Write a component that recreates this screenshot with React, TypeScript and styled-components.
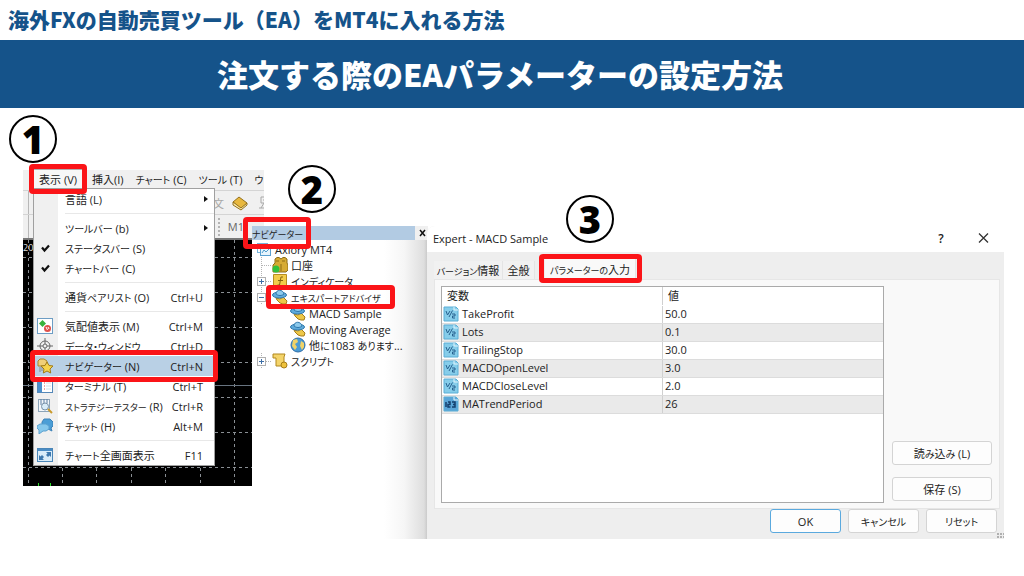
import React from "react";
import styled, { createGlobalStyle, css } from "styled-components";

const GlobalStyle = createGlobalStyle`
  * { box-sizing: border-box; }
  body {
    margin: 0;
    background: #ffffff;
    color: #222222;
    font-family: "Open Sans", "Noto Sans CJK JP", sans-serif;
    font-size: 11px;
  }
  button {
    margin: 0;
    padding: 0;
    border: 0;
    background: none;
    color: inherit;
    font: inherit;
    white-space: nowrap;
  }
  ul { list-style: none; margin: 0; padding: 0; }
  svg { display: block; }
`;

const Page = styled.main`
  overflow: hidden;
  padding-bottom: 37px;
`;

const Lead = styled.p`
  margin: 0;
  height: 40px;
  padding: 0 8px;
  color: #15538a;
  font: 900 21px/38px "Noto Sans CJK JP", sans-serif;
  white-space: nowrap;
`;

const Banner = styled.h1`
  margin: 0;
  height: 68px;
  padding-right: 24px;
  background: #15538a;
  color: #ffffff;
  text-align: center;
  font: 900 31px/68px "Noto Sans CJK JP", sans-serif;
`;

const Steps = styled.div`
  display: flex;
  align-items: flex-start;
  padding: 0 20px 0 23px;
`;

const Step = styled.section<{ $top: number }>`
  position: relative;
  min-width: 0;
  margin-top: ${(p) => p.$top}px;
`;

const PlatformStep = styled(Step)`
  flex: 0 0 241px;
`;

const NavigatorStep = styled(Step)`
  flex: 0 0 176px;
  margin-left: -12px;
`;

const DialogStep = styled(Step)`
  flex: 1;
  margin-left: -1px;
`;

const Badge = styled.span<{ $x: number; $y: number }>`
  position: absolute;
  z-index: 3;
  left: ${(p) => p.$x}px;
  top: ${(p) => p.$y}px;
  width: 48px;
  height: 48px;
  border: 2px solid #000000;
  border-radius: 50%;
  background: #ffffff;
  color: #000000;
  text-align: center;
  font: 900 38px/44px "Noto Sans", sans-serif;
`;

const Framed = styled.span<{ $x?: number; $y?: number }>`
  position: relative;
  display: inline-flex;
  align-items: center;
  &::after {
    content: "";
    position: absolute;
    z-index: 2;
    inset: -${(p) => p.$y ?? 4}px -${(p) => p.$x ?? 4}px;
    border: 5px solid #fb1418;
    border-radius: 4px;
    pointer-events: none;
  }
`;

const LabelText = styled.span`
  white-space: nowrap;
`;

const KanaRun = styled.span<{ $tight?: boolean }>`
  font-size: ${(p) => (p.$tight ? 9 : 10)}px;
  font-feature-settings: "palt";
`;

/* Kana is set smaller and proportionally, as in the narrow Windows UI fonts. */
function Label({ children, tight }: { children: string; tight?: boolean }) {
  return (
    <LabelText>
      {children
        .split(/([\u3041-\u30ff]+)/)
        .map((part, i) => (i % 2 ? <KanaRun key={i} $tight={tight}>{part}</KanaRun> : part))}
    </LabelText>
  );
}

/* ---------- trading platform ---------- */

const MenuBar = styled.div`
  display: flex;
  align-items: center;
  gap: 12px;
  height: 20px;
  padding: 0 0 2px 10px;
  background: #f0f0f0;
`;

const MenuBarItem = styled.button`
  flex: none;
  height: 20px;
`;

const OpenMenuItem = styled(MenuBarItem)`
  width: 50px;
  border: 1px solid #b0b0b0;
  background: #f7f7f7;
`;

const OpenMenuFrame = styled(Framed)`
  margin-right: -3px;
`;

const ToolRow = styled.div<{ $end?: number }>`
  display: flex;
  align-items: center;
  justify-content: flex-end;
  gap: 8px;
  height: 24px;
  padding-right: ${(p) => p.$end ?? 0}px;
  overflow: hidden;
  border-top: 1px solid #d4d4d4;
  background: linear-gradient(90deg, #f0f0f0 5px, #b8b8b8 5px, #b8b8b8 6px, #f0f0f0 6px);
  color: #666666;
`;

const FaintText = styled.span`
  color: #a8a8a8;
`;

const CutTool = styled.span`
  margin-right: -8px;
`;

const Grip = styled.span`
  height: 18px;
  border-left: 2px dotted #b4b4b4;
`;

const ChartArea = styled.div`
  width: 229px;
  height: 248px;
  background: #000000;
  border-top: 2px solid #777777;
  svg { width: 100%; height: 100%; overflow: visible; }
`;

const Menu = styled.ul`
  position: absolute;
  z-index: 1;
  left: 10px;
  top: 18px;
  width: 182px;
  border: 1px solid #a0a0a0;
  background: linear-gradient(90deg, #f0f0f0 24px, #ffffff 24px);
`;

const MenuRow = styled.button<{ $active?: boolean }>`
  display: flex;
  align-items: center;
  width: 180px;
  height: 20px;
  padding-right: 11px;
  text-align: left;
  ${(p) => p.$active && css`background: #b9d0e5;`}
`;

const MenuIcon = styled.span`
  flex: 0 0 31px;
  padding-left: 3px;
`;

const Shortcut = styled.span`
  margin-left: auto;
`;

const SubmenuArrow = styled.span`
  margin: 0 -5px 0 auto;
  border: 3px solid transparent;
  border-left: 4px solid #111111;
  border-right: 0;
`;

const Divider = styled.li`
  height: 9px;
  margin-left: 31px;
  &::before {
    content: "";
    display: block;
    padding-top: 4px;
    border-bottom: 1px solid #e8e8e8;
  }
`;

const MenuFrame = styled(Framed)`
  display: flex;
`;

type IconName =
  | "check" | "market" | "target" | "star" | "terminal" | "tester" | "chat" | "full"
  | "root" | "people" | "script" | "fx" | "hat" | "globe" | "half" | "int" | "book" | "chartTool" | "none";

function Icon({ name }: { name: IconName }) {
  return (
    <svg width="16" height="16" viewBox="0 0 16 16" aria-hidden="true">
      {name === "check" && <path d="M5 7.500l2.500 3L12 5.500" fill="none" stroke="#111" strokeWidth="2.200" />}
      {name === "market" && (
        <>
          <rect x=".5" y=".5" width="15" height="15" fill="#fff" stroke="#6d9dc4" />
          <path d="M5.500 2L9 5.500 5.500 9 2 5.500z" fill="#38b23c" />
          <circle cx="10.500" cy="10.500" r="3.500" fill="#e0504a" />
          <path d="M9 9l1.500 3M11 9l1 2" stroke="#fff" />
        </>
      )}
      {name === "target" && (
        <g fill="none" stroke="#666">
          <circle cx="8" cy="8" r="5" />
          <circle cx="8" cy="8" r="2" />
          <path d="M8 0v6M8 10v6M0 8h6M10 8h6" />
        </g>
      )}
      {name === "star" && (
        <>
          <path d="M1 3l2-2h4l3 2v5H1z" fill="#f0cf78" stroke="#a9852d" />
          <path d="M3 9v5M5 9v4" stroke="#8b8b8b" />
          <path d="M10 4l2 3.500 4 .5-3 3 .700 4L10 13l-3.700 2 .700-4-3-3 4-.500z" fill="#f7d44c" stroke="#a07a17" />
        </>
      )}
      {name === "terminal" && (
        <>
          <rect x=".5" y="1.500" width="15" height="13" fill="#fff" stroke="#5588b8" />
          <path d="M1 2h4v12H1z" fill="#4b8fcc" />
          <path d="M7 5h1M7 8h1M7 11h1" stroke="#d44" />
          <path d="M9 5h5M9 8h5M9 11h5" stroke="#d3dfe9" />
        </>
      )}
      {name === "tester" && (
        <>
          <rect x="1.500" y="1.500" width="11" height="12" fill="#f4f7fa" stroke="#8ca4b8" />
          <path d="M4 1v6M7 1v4M10 1v4" stroke="#5b7fa3" />
          <circle cx="8" cy="8.500" r="3.500" fill="#d9ecf8" stroke="#7890a6" />
          <path d="M11 11l4 4" stroke="#c99a2c" strokeWidth="2" />
        </>
      )}
      {name === "chat" && (
        <>
          <path d="M7 1h6l3 3v4l-2 2 1 3-4-2-6-3V4z" fill="#4b9ed6" stroke="#3c82b8" />
          <path d="M3 6h6l3 2v3l-3 2H6l-4 3v-4L0 10V8z" fill="#86c8ec" stroke="#5aa0cf" />
        </>
      )}
      {name === "full" && (
        <>
          <rect x=".5" y="1.500" width="15" height="13" fill="#d9ecf9" stroke="#4a86b8" />
          <path d="M1 2h14v2H1z" fill="#4a8cc4" />
          <path d="M9 5h5v5l-1.500-1.500L11 10 9 8l1.500-1.500zM7 13H2V8l1.500 1.500L5 8l2 2-1.500 1.500z" fill="#3d78ae" />
        </>
      )}
      {name === "root" && (
        <>
          <rect x="1.500" y="2.500" width="10" height="9" fill="#fff" stroke="#78b4dc" />
          <rect x="4.500" y="5.500" width="10" height="9" fill="#e7f4fc" stroke="#5aa0d0" />
          <path d="M6 12l2-3 2 2 3-3" fill="none" stroke="#4f9ccc" />
        </>
      )}
      {name === "people" && (
        <>
          <path d="M1 15V8l2-2V2l2-1.500h2L9 2l2-1.500h2L15 2v4l1 2v5l-2 2z" fill="#d6ab35" stroke="#8d6c16" />
          <path d="M4 4h3M10 4h3M9 7v7" stroke="#8d6c16" />
          <circle cx="4" cy="12" r="3.500" fill="#32c13c" />
        </>
      )}
      {name === "fx" && (
        <>
          <path d="M1.500 1.500h13v13h-13z" fill="#f2cc4a" stroke="#b78d1f" />
          <path d="M11 4H9L7.500 12H5.500M6 7.500h5" fill="none" stroke="#86640c" />
        </>
      )}
      {name === "hat" && (
        <>
          <path d="M4 9l4 1 3-2 4 4-1 3h-3l-3-1-3-3z" fill="#edc748" stroke="#a77d19" />
          <ellipse cx="7.500" cy="6" rx="7" ry="3" fill="#5eaadb" stroke="#2f78ac" />
          <path d="M4 5c0-5 7-5 8 0-2 2-6 2-8 0z" fill="#8dcaec" stroke="#2f78ac" />
        </>
      )}
      {name === "globe" && (
        <>
          <circle cx="8" cy="8" r="7" fill="#4b9bd4" stroke="#2f6ea8" />
          <path d="M3 3l4-1 1 3-3 2 2 3-2 3-3-4zM11 4l3 2v4l-2 3-2-4z" fill="#f0d266" />
        </>
      )}
      {name === "script" && (
        <>
          <path d="M1 1h12l-1 3v9H4V5H1z" fill="#f4d46a" stroke="#b0871f" />
          <circle cx="12" cy="12" r="3" fill="#eec23c" stroke="#a77d19" />
        </>
      )}
      {(name === "half" || name === "int") && (
        <>
          <path d="M1 1h12l2 2v12H1z" fill={name === "int" ? "#5aa5d8" : "#86cdea"} stroke="#5aaed6" />
          <path d="M11 1v3h4" fill="none" stroke="#e0f4fc" />
          {name === "half" ? (
            <path d="M3 5l1.500 4L7 5M9.500 4.500L6 11M9 8h3v2H9.500v2H12" fill="none" stroke="#27618f" />
          ) : (
            <path d="M3 6v5M5 6h2v2.500H5V11h2.500M9 6h3v5H9M10 8.500h2" fill="none" stroke="#133e6c" strokeWidth="1.500" />
          )}
        </>
      )}
      {name === "book" && (
        <>
          <path d="M1 7l6-5 8 6-6 6z" fill="#e8b83e" stroke="#94701a" />
          <path d="M1 7v3l8 5 6-5V8l-6 5z" fill="#fbe9a8" stroke="#94701a" />
        </>
      )}
      {name === "chartTool" && (
        <g fill="none" stroke="#a8a8a8">
          <path d="M5 2h8v6H5zM3 13h10M5 13l3-5M7 5h4" />
        </g>
      )}
    </svg>
  );
}

type MenuEntry = {
  label: string;
  icon?: IconName;
  keys?: string;
  sub?: boolean;
  active?: boolean;
  tight?: boolean;
} | null;

const menuEntries: MenuEntry[] = [
  { label: "言語 (L)", sub: true },
  null,
  { label: "ツールバー (b)", sub: true },
  { label: "ステータスバー (S)", icon: "check" },
  { label: "チャートバー (C)", icon: "check" },
  null,
  { label: "通貨ペアリスト (O)", keys: "Ctrl+U" },
  null,
  { label: "気配値表示 (M)", icon: "market", keys: "Ctrl+M" },
  { label: "データ・ウィンドウ", icon: "target", keys: "Ctrl+D" },
  { label: "ナビゲーター (N)", icon: "star", keys: "Ctrl+N", active: true },
  { label: "ターミナル (T)", icon: "terminal", keys: "Ctrl+T" },
  { label: "ストラテジーテスター (R)", icon: "tester", keys: "Ctrl+R", tight: true },
  { label: "チャット (H)", icon: "chat", keys: "Alt+M" },
  null,
  { label: "チャート全画面表示", icon: "full", keys: "F11" },
];

function ViewMenu() {
  return (
    <Menu>
      {menuEntries.map((entry, i) => {
        if (!entry) return <Divider key={i} />;
        const row = (
          <MenuRow type="button" $active={entry.active}>
            <MenuIcon><Icon name={entry.icon ?? "none"} /></MenuIcon>
            <Label tight={entry.tight}>{entry.label}</Label>
            {entry.keys && <Shortcut>{entry.keys}</Shortcut>}
            {entry.sub && <SubmenuArrow />}
          </MenuRow>
        );
        return <li key={i}>{entry.active ? <MenuFrame $y={6}>{row}</MenuFrame> : row}</li>;
      })}
    </Menu>
  );
}

const gridX = [5, 39, 73, 108, 142, 177, 211];
const gridY = [17, 52, 87, 122, 157, 192, 227];

const AxisText = styled.text`
  fill: #dddddd;
  font-size: 9px;
`;

function PriceChart() {
  return (
    <ChartArea>
      <svg aria-hidden="true">
        <g stroke="#8a8f94" strokeDasharray="3 3">
          {gridX.map((x) => <line key={x} x1={x + 0.5} x2={x + 0.5} y1="0" y2="246" />)}
          {gridY.map((y) => <line key={y} x1="0" x2="229" y1={y + 0.5} y2={y + 0.5} />)}
        </g>
        <path d="M0 145.500h229" stroke="#687480" />
        <path d="M15.500 243v3M27.500 243v3" stroke="#2bd92b" />
        <AxisText x="0" y="11">206</AxisText>
      </svg>
    </ChartArea>
  );
}

/* ---------- navigator ---------- */

const NavPanel = styled.div`
  height: 313px;
  background: linear-gradient(90deg, #ffffff 132px, #f6f6f6 152px, #dedede 172px, #c4c4c4);
`;

const NavTitle = styled.div`
  display: flex;
  align-items: center;
  justify-content: space-between;
  height: 14px;
  padding-right: 1px;
  background: linear-gradient(90deg, #b2cbe3 163px, #f0f0f0 163px);
`;

const NavTitleFrame = styled(Framed)`
  width: 50px;
  height: 14px;
`;

const CloseMark = styled.button`
  width: 8px;
  height: 14px;
`;

const Tree = styled.ul`
  padding: 1px 0 0 4px;
`;

const TreeItem = styled.li<{ $level: number }>`
  display: flex;
  align-items: center;
  height: 16px;
  padding-left: ${(p) => [0, 0, 34][p.$level]}px;
`;

const TreeButton = styled.button`
  display: flex;
  align-items: center;
  gap: 3px;
  height: 16px;
`;

const TreeFrame = styled(Framed)`
  width: 117px;
`;

const Branch = styled.span`
  flex: 0 0 16px;
`;

function Expander({ kind }: { kind: "plus" | "minus" | "line" }) {
  return (
    <Branch>
      <svg width="16" height="16" viewBox="0 0 16 16" aria-hidden="true">
        <path d="M5.500 0v16M6 8.500h9" stroke="#b4b4b4" strokeDasharray="1 1" />
        {kind !== "line" && (
          <>
            <rect x="1.500" y="4.500" width="8" height="8" fill="#fff" stroke="#b0b0b0" />
            <path d={kind === "plus" ? "M3 8.500h5M5.500 6v5" : "M3 8.500h5"} stroke="#3d6ea5" />
          </>
        )}
      </svg>
    </Branch>
  );
}

type TreeNode = { label: string; icon: IconName; level: 0 | 1 | 2; branch?: "plus" | "minus" | "line"; framed?: boolean };

const tree: TreeNode[] = [
  { label: "Axiory MT4", icon: "root", level: 0 },
  { label: "口座", icon: "people", level: 1, branch: "line" },
  { label: "インディケータ", icon: "fx", level: 1, branch: "plus" },
  { label: "エキスパートアドバイザ", icon: "hat", level: 1, branch: "minus", framed: true },
  { label: "MACD Sample", icon: "hat", level: 2 },
  { label: "Moving Average", icon: "hat", level: 2 },
  { label: "他に1083 あります...", icon: "globe", level: 2 },
  { label: "スクリプト", icon: "script", level: 1, branch: "plus" },
];

function NavigatorTree() {
  return (
    <Tree>
      {tree.map((node) => {
        const button = (
          <TreeButton type="button">
            <Icon name={node.icon} />
            <Label tight={node.framed}>{node.label}</Label>
          </TreeButton>
        );
        return (
          <TreeItem key={node.label} $level={node.level}>
            {node.branch && <Expander kind={node.branch} />}
            {node.framed ? <TreeFrame $x={6}>{button}</TreeFrame> : button}
          </TreeItem>
        );
      })}
    </Tree>
  );
}

/* ---------- expert dialog ---------- */

const Dialog = styled.div`
  position: relative;
  height: 313px;
  padding: 0 4px 6px 7px;
  border-radius: 8px 0 0 0;
  background: #eeeeee;
  overflow: hidden;
`;

const TitleBar = styled.header`
  display: flex;
  align-items: center;
  height: 26px;
  margin: 0 -4px 0 -7px;
  padding: 0 14px 2px 6px;
  background: #ffffff;
`;

const TitleText = styled.span`
  flex: 1;
`;

const HelpButton = styled.button`
  width: 14px;
  margin-right: 28px;
  font-size: 12px;
  font-weight: 600;
`;

const Tabs = styled.div`
  display: flex;
  align-items: flex-end;
  height: 27px;
`;

const Tab = styled.button<{ $width: number; $active?: boolean }>`
  width: ${(p) => p.$width}px;
  height: ${(p) => (p.$active ? 21 : 18)}px;
  background: ${(p) => (p.$active ? "#f9f9f9" : "#f1f1f1")};
  border-right: 1px solid #e4e4e4;
`;

const ActiveTabFrame = styled(Framed)`
  margin-left: 10px;
`;

const TabPanel = styled.div`
  display: flex;
  align-items: stretch;
  gap: 8px;
  height: 230px;
  padding: 6px 7px 5px 6px;
  border: 1px solid #e6e6e6;
  background: #f9f9f9;
`;

const ListBox = styled.div`
  flex: 1;
  border: 1px solid #aaaaaa;
  background: #ffffff;
`;

const Params = styled.table`
  width: 100%;
  table-layout: fixed;
  border-collapse: collapse;
  th, td {
    height: 18px;
    padding: 0 2px;
    border-bottom: 1px solid #dcdcdc;
    text-align: left;
    font-weight: 400;
    line-height: 16px;
  }
  td:first-child { padding-left: 1px; }
  th { border-bottom-color: #ffffff; padding-left: 5px; }
  th + th, td + td { border-left: 1px solid #d0d0d0; }
  tbody tr:nth-child(even) { background: #eaeaea; }
`;

const NameCell = styled.span`
  display: flex;
  align-items: center;
  gap: 3px;
`;

const SideButtons = styled.div`
  flex: 0 0 100px;
  display: flex;
  flex-direction: column;
  justify-content: flex-end;
  gap: 12px;
  padding-bottom: 2px;
`;

const PushButton = styled.button<{ $primary?: boolean }>`
  flex: 0 0 24px;
  min-width: 71px;
  height: 24px;
  border: 1px solid ${(p) => (p.$primary ? "#5aa9de" : "#d4d4d4")};
  border-radius: 3px;
  background: #fdfdfd;
`;

const Actions = styled.footer`
  display: flex;
  justify-content: flex-end;
  gap: 7px;
  padding-right: 3px;
`;

const ResizeGrip = styled.span`
  position: absolute;
  right: 0;
  bottom: 0;
`;

const params: [string, string, IconName][] = [
  ["TakeProfit", "50.0", "half"],
  ["Lots", "0.1", "half"],
  ["TrailingStop", "30.0", "half"],
  ["MACDOpenLevel", "3.0", "half"],
  ["MACDCloseLevel", "2.0", "half"],
  ["MATrendPeriod", "26", "int"],
];

function ExpertDialog() {
  return (
    <Dialog>
      <TitleBar>
        <TitleText>Expert - MACD Sample</TitleText>
        <HelpButton type="button">?</HelpButton>
        <button type="button" aria-label="Close">
          <svg width="14" height="12" viewBox="0 0 14 12">
            <path d="M3 1.500l9 9M12 1.500l-9 9" stroke="#333" strokeWidth="1.300" />
          </svg>
        </button>
      </TitleBar>
      <Tabs>
        <Tab type="button" $width={69}><Label tight>バージョン情報</Label></Tab>
        <Tab type="button" $width={32}><Label>全般</Label></Tab>
        <ActiveTabFrame $x={6}>
          <Tab type="button" $width={91} $active><Label tight>パラメーターの入力</Label></Tab>
        </ActiveTabFrame>
      </Tabs>
      <TabPanel>
        <ListBox>
          <Params>
            <thead>
              <tr><th>変数</th><th>値</th></tr>
            </thead>
            <tbody>
              {params.map(([name, value, icon]) => (
                <tr key={name}>
                  <td><NameCell><Icon name={icon} />{name}</NameCell></td>
                  <td>{value}</td>
                </tr>
              ))}
            </tbody>
          </Params>
        </ListBox>
        <SideButtons>
          <PushButton type="button"><Label>読み込み (L)</Label></PushButton>
          <PushButton type="button"><Label>保存 (S)</Label></PushButton>
        </SideButtons>
      </TabPanel>
      <Actions>
        <PushButton type="button" $primary>OK</PushButton>
        <PushButton type="button"><Label>キャンセル</Label></PushButton>
        <PushButton type="button"><Label>リセット</Label></PushButton>
      </Actions>
      <ResizeGrip>
        <svg width="7" height="6" aria-hidden="true">
          <path d="M0 1h7M0 4h7" stroke="#b0b0b0" strokeWidth="2" strokeDasharray="2 1" />
        </svg>
      </ResizeGrip>
    </Dialog>
  );
}

export default function App() {
  return (
    <>
      <GlobalStyle />
      <Page>
        <Lead>海外FXの自動売買ツール（EA）をMT4に入れる方法</Lead>
        <Banner>注文する際のEAパラメーターの設定方法</Banner>
        <Steps>
          <PlatformStep $top={62}>
            <Badge $x={-14} $y={-55}>1</Badge>
            <MenuBar>
              <OpenMenuFrame $y={5}>
                <OpenMenuItem type="button"><Label>表示 (V)</Label></OpenMenuItem>
              </OpenMenuFrame>
              <MenuBarItem type="button"><Label>挿入(I)</Label></MenuBarItem>
              <MenuBarItem type="button"><Label>チャート (C)</Label></MenuBarItem>
              <MenuBarItem type="button"><Label>ツール (T)</Label></MenuBarItem>
              <MenuBarItem type="button"><Label>ウ</Label></MenuBarItem>
            </MenuBar>
            <ToolRow>
              <FaintText>文</FaintText>
              <Icon name="book" />
              <CutTool><Icon name="chartTool" /></CutTool>
            </ToolRow>
            <ToolRow $end={20}><Grip />M1</ToolRow>
            <PriceChart />
            <ViewMenu />
          </PlatformStep>
          <NavigatorStep $top={118}>
            <Badge $x={36} $y={-61}>2</Badge>
            <NavPanel>
              <NavTitle>
                <NavTitleFrame $x={9} $y={9}><Label tight>ナビゲーター</Label></NavTitleFrame>
                <CloseMark type="button" aria-label="Close navigator">
                  <svg width="8" height="14" viewBox="0 0 8 14">
                    <path d="M1 4l5 6M6 4l-5 6" stroke="#111" strokeWidth="1.500" />
                  </svg>
                </CloseMark>
              </NavTitle>
              <NavigatorTree />
            </NavPanel>
          </NavigatorStep>
          <DialogStep $top={118}>
            <Badge $x={139} $y={-31}>3</Badge>
            <ExpertDialog />
          </DialogStep>
        </Steps>
      </Page>
    </>
  );
}
